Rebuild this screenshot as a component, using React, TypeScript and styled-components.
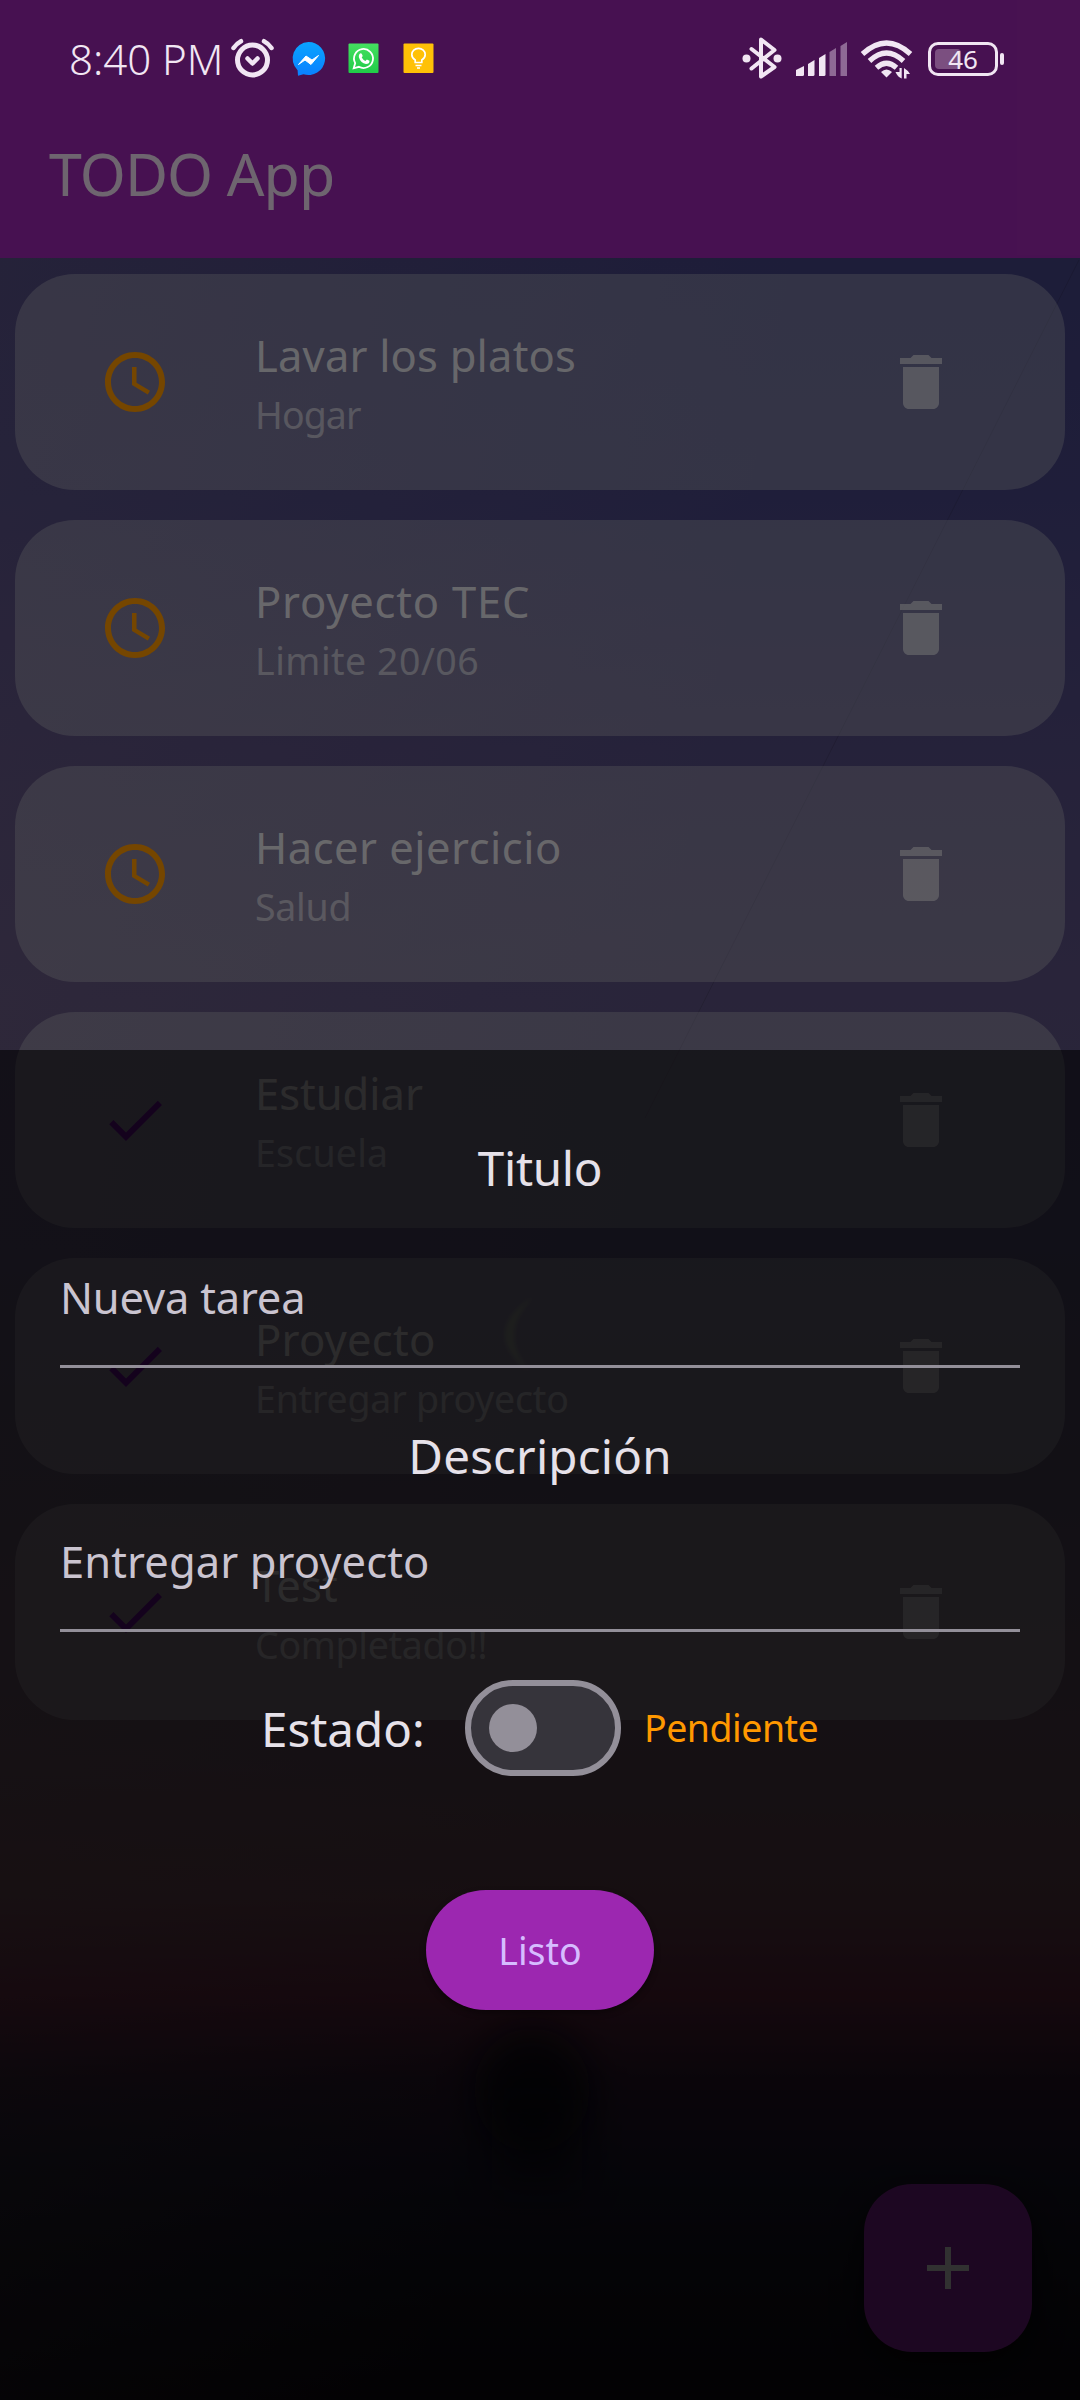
import React from "react";
import styled, { createGlobalStyle } from "styled-components";
import { MdAccessTime, MdAdd, MdCheck, MdDelete } from "react-icons/md";

const Global = createGlobalStyle`
  body { margin: 0; background: #000; }
  * { box-sizing: border-box; }
`;

const Screen = styled.div`
  position: relative;
  width: 1080px;
  height: 2400px;
  overflow: hidden;
  font-family: "Noto Sans", "Open Sans", sans-serif;
  font-weight: 400;
`;

const Page = styled.div`
  display: flex;
  flex-direction: column;
  height: 2400px;
`;

const AppBar = styled.header`
  flex: none;
  height: 258px;
  padding: 116px 0 0 49px;
  background: #9c27b0;
`;

const AppTitle = styled.h1`
  margin: 0;
  font-size: 59px;
  line-height: 114px;
  font-weight: 400;
  letter-spacing: -0.9px;
  color: rgba(255, 255, 255, 0.84);
`;

const Body = styled.main`
  position: relative;
  flex: 1;
  background:
    linear-gradient(100deg, rgba(150, 120, 130, 0.2), rgba(60, 50, 110, 0) 55%),
    linear-gradient(
      180deg,
      #403f7c 0, #45437e 240px, #524a7e 490px, #5a507e 742px, #5c547c 992px,
      #625670 1232px, #6f5668 1500px, #774e5c 1640px, #6f2c48 1740px,
      #38203a 1820px, #221d34 1900px, #181824 2000px, #120d16 2142px
    );
`;

const Scenery = styled.svg`
  position: absolute;
  inset: 0;
`;

const TaskList = styled.ul`
  position: relative;
  display: flex;
  flex-direction: column;
  gap: 30px;
  margin: 0;
  padding: 16px 15px;
  list-style: none;
`;

const TaskCard = styled.li`
  display: flex;
  align-items: center;
  height: 216px;
  padding: 0 108px 0 84px;
  border-radius: 60px;
  background: rgba(212, 214, 214, 0.32);
`;

const StateIcon = styled.span<{ $done: boolean }>`
  display: flex;
  width: 72px;
  margin-right: 84px;
  font-size: 72px;
  color: ${(p) => (p.$done ? "#6a0f96" : "#ff9800")};
`;

const TaskText = styled.div`
  flex: 1;
  display: flex;
  flex-direction: column;
  padding-top: 6px;
`;

const TaskTitle = styled.span<{ $ls: number }>`
  font-size: 43.5px;
  line-height: 60px;
  letter-spacing: ${(p) => p.$ls}px;
  color: rgba(255, 255, 255, 0.8);
`;

const TaskNote = styled.span<{ $ls: number }>`
  font-size: 37.5px;
  line-height: 60px;
  letter-spacing: ${(p) => p.$ls}px;
  color: rgba(255, 255, 255, 0.54);
`;

const TrashIcon = styled.span`
  display: flex;
  font-size: 72px;
  color: rgba(255, 255, 255, 0.54);
`;

const AddButton = styled.button`
  position: absolute;
  right: 48px;
  bottom: 48px;
  display: flex;
  align-items: center;
  justify-content: center;
  width: 168px;
  height: 168px;
  padding: 0;
  border: 0;
  border-radius: 48px;
  background: #9c27b0;
  box-shadow: 0 12px 30px rgba(0, 0, 0, 0.6);
  color: #fff;
  font-size: 72px;
`;

const Scrim = styled.div`
  position: absolute;
  inset: 0;
  display: flex;
  flex-direction: column;
  justify-content: flex-end;
  background: rgba(0, 0, 0, 0.54);
`;

const Sheet = styled.section`
  display: flex;
  flex-direction: column;
  align-items: center;
  height: 1350px;
  padding: 86px 60px 0;
  background: rgba(0, 0, 0, 0.58);
`;

const Label = styled.span<{ $ls?: number }>`
  font-size: 47.5px;
  line-height: 64px;
  letter-spacing: ${(p) => p.$ls ?? 0}px;
  color: #e6e1e9;
  white-space: nowrap;
`;

const Field = styled.div<{ $ls: number; $top: number; $bottom: number }>`
  align-self: stretch;
  margin: ${(p) => p.$top}px 0 ${(p) => p.$bottom}px;
  padding: 0 0 38px 0;
  border-bottom: 3px solid #938f99;
  font-size: 43.5px;
  line-height: 60px;
  letter-spacing: ${(p) => p.$ls}px;
  color: #cac4d0;
`;

const StateRow = styled.div`
  display: flex;
  align-items: center;
  align-self: stretch;
  height: 96px;
  padding-left: 201px;
`;

const LabelSlot = styled.div`
  width: 204px;
  display: flex;
  padding-top: 1px;
`;

const Switch = styled.div`
  display: flex;
  align-items: center;
  width: 156px;
  height: 96px;
  padding-left: 18px;
  border: 6px solid #938f99;
  border-radius: 48px;
  background: #36343b;
`;

const Thumb = styled.span`
  width: 48px;
  height: 48px;
  border-radius: 50%;
  background: #938f99;
`;

const StateName = styled.span`
  margin: 0 0 0 23px;
  font-size: 37.5px;
  line-height: 60px;
  letter-spacing: -0.5px;
  color: #ff9800;
`;

const DoneButton = styled.button`
  width: 228px;
  height: 120px;
  margin-top: 114px;
  padding: 0;
  border: 0;
  border-radius: 60px;
  background: #9c27b0;
  box-shadow: 0 3px 6px rgba(0, 0, 0, 0.4);
  font: 400 37.5px "Noto Sans", "Open Sans", sans-serif;
  color: #d6bcff;
`;

const StatusBar = styled.div`
  position: absolute;
  top: 0;
  left: 0;
  right: 0;
  display: flex;
  align-items: center;
  height: 118px;
  padding: 0 82px 0 69px;
`;

const Clock = styled.span`
  width: 161px;
  font-size: 42px;
  font-weight: 300;
  line-height: 60px;
  white-space: nowrap;
  color: #f1e6f3;
`;

const Spacer = styled.span`
  flex: 1;
`;

const StatusGlyphs = styled.svg`
  flex: none;
  display: block;
`;

const BatteryBox = styled.div`
  position: relative;
  display: flex;
  align-items: center;
  justify-content: center;
  width: 70px;
  height: 34px;
  margin-left: 15px;
  border: 3.5px solid #f1e6f3;
  border-radius: 10px;
  font-size: 26px;
  line-height: 34px;
  color: #f1e6f3;
  &::before {
    content: "";
    position: absolute;
    left: 4px;
    top: 4px;
    width: 26px;
    height: 20px;
    border-radius: 4px;
    background: #7b4f80;
  }
  &::after {
    content: "";
    position: absolute;
    right: -9px;
    top: 8px;
    width: 4px;
    height: 12px;
    border-radius: 2px;
    background: #f1e6f3;
  }
`;

const BatteryLevel = styled.span`
  position: relative;
`;

interface Task {
  title: string;
  note: string;
  done: boolean;
  tls: number;
  nls: number;
}

const tasks: Task[] = [
  { title: "Lavar los platos", note: "Hogar", done: false, tls: 0.2, nls: -0.9 },
  { title: "Proyecto TEC", note: "Limite 20/06", done: false, tls: 0.8, nls: 0.5 },
  { title: "Hacer ejercicio", note: "Salud", done: false, tls: 0.5, nls: -0.25 },
  { title: "Estudiar", note: "Escuela", done: true, tls: 0, nls: 0.2 },
  { title: "Proyecto", note: "Entregar proyecto", done: true, tls: 0.25, nls: -0.2 },
  { title: "Test", note: "Completado!!", done: true, tls: 0.2, nls: -0.3 },
];

function LeftGlyphs() {
  return (
    <StatusGlyphs width="206" height="48" viewBox="230 35 206 48">
      <defs>
        <linearGradient id="msg" x1="0" y1="0" x2="0" y2="1">
          <stop offset="0" stopColor="#0aa4ff" />
          <stop offset="1" stopColor="#0a80ff" />
        </linearGradient>
        <linearGradient id="wa" x1="0" y1="0" x2="0" y2="1">
          <stop offset="0" stopColor="#45e060" />
          <stop offset="1" stopColor="#20cc48" />
        </linearGradient>
      </defs>
      <g fill="none" stroke="#f1e6f3" strokeLinecap="round" strokeLinejoin="round">
        <circle cx="252.500" cy="60" r="15" strokeWidth="5" />
        <path d="M247.500 58.500l5 5 5-5" strokeWidth="4.500" />
        <path d="M233.500 48q3-4.500 7.500-6.800M271.500 48q-3-4.500-7.500-6.800" strokeWidth="4.500" />
      </g>
      <path d="M308.500 42a16.500 16.500 0 1 1-5 32.200l-5.500 1.600-.4-5.500A16.500 16.500 0 0 1 308.500 42z" fill="url(#msg)" />
      <path d="M298.500 64.500l7.500-8.500 6 4 6.500-4.500-7.500 9-6-4.500z" fill="#fff" stroke="#fff" strokeLinejoin="round" />
      <rect x="348.500" y="43.500" width="30" height="29.500" rx="1" fill="url(#wa)" />
      <path d="M353.700 68.300l1.500-5.200a9.500 9.500 0 1 1 3.700 3.700z" fill="none" stroke="#fff" strokeWidth="1.800" />
      <path d="M359.500 54q1.500-1.500 2.500.2l.7 1.800-1 1.600q1.300 2.300 3.700 3.400l1.500-1.500 2.600 1.300q.2 3.200-3.500 3.200-5.500-1-7.200-7-.1-2 .7-3z" fill="#fff" />
      <rect x="403.500" y="43.500" width="30" height="29.500" rx="1" fill="#ffc107" />
      <path d="M415.200 62.500v-2.500q-3.400-2-3.400-5.500a6.700 6.200 0 0 1 13.400 0q0 3.500-3.400 5.500v2.500zM415.500 65.500h6M417 68h3" fill="none" stroke="#fff" strokeWidth="1.700" />
    </StatusGlyphs>
  );
}

function RightGlyphs() {
  return (
    <StatusGlyphs width="172" height="48" viewBox="741 35 172 48">
      <path d="M751.500 49l23 18L761 76.500V39.500L774.500 50l-23 18.500" fill="none" stroke="#f1e6f3" strokeWidth="4" strokeLinecap="round" strokeLinejoin="round" />
      <circle cx="746.500" cy="58.500" r="4" fill="#f1e6f3" />
      <circle cx="777.500" cy="58.500" r="4" fill="#f1e6f3" />
      <g fill="#f1e6f3">
        <path d="M796 70l8-4v8.500q0 1.500-1.500 1.500H796z" />
        <path d="M808 64l6.500-4v14.500q0 1.500-1.500 1.500h-5z" />
        <path d="M819 58l6.500-4v20.500q0 1.500-1.500 1.500h-5z" />
        <path d="M829.500 52l6.500-4v28h-6.500zM840.500 46l6.500-4v34h-6.500z" opacity=".42" />
        <path d="M886.500 77.500l-5.500-5.500q5.500-5 11 0z" />
        <path d="M895.500 72h4v-4h2.200v10.500q-4-1.500-6.200-6.500zM904 68q3.500 2 6 6h-3.500v4.500H904z" />
      </g>
      <g fill="none" stroke="#f1e6f3" strokeWidth="5.200">
        <path d="M862.500 54q24-22 48 0M869.500 61q17-16 34 0M876.500 67.800q10-9 20 0" />
      </g>
    </StatusGlyphs>
  );
}

export default function App() {
  return (
    <Screen>
      <Global />
      <Page>
        <AppBar>
          <AppTitle>TODO App</AppTitle>
        </AppBar>
        <Body>
          <Scenery width="1080" height="2142" viewBox="0 258 1080 2142">
            <defs>
              <filter id="soft" x="-50%" y="-50%" width="200%" height="200%">
                <feGaussianBlur stdDeviation="18" />
              </filter>
              <filter id="glow" x="-50%" y="-50%" width="200%" height="200%">
                <feGaussianBlur stdDeviation="2" />
              </filter>
            </defs>
            <path d="M1079 260L645 1118" stroke="#000" strokeOpacity=".12" strokeWidth="1" />
            <path d="M534 1296q-56 36-4 76q-34-38 4-76z" fill="#8d9a80" opacity=".75" filter="url(#glow)" />
            <ellipse cx="532" cy="2090" rx="58" ry="62" fill="#0a0c12" opacity=".85" filter="url(#soft)" />
            <rect x="492" y="2100" width="90" height="90" fill="#0a0c12" opacity=".5" filter="url(#soft)" />
          </Scenery>
          <TaskList>
            {tasks.map((t) => (
              <TaskCard key={t.title}>
                <StateIcon $done={t.done}>{t.done ? <MdCheck /> : <MdAccessTime />}</StateIcon>
                <TaskText>
                  <TaskTitle $ls={t.tls}>{t.title}</TaskTitle>
                  <TaskNote $ls={t.nls}>{t.note}</TaskNote>
                </TaskText>
                <TrashIcon>
                  <MdDelete />
                </TrashIcon>
              </TaskCard>
            ))}
          </TaskList>
          <AddButton>
            <MdAdd />
          </AddButton>
        </Body>
      </Page>
      <Scrim>
        <Sheet>
          <Label $ls={-0.3}>Titulo</Label>
          <Field $ls={-0.2} $top={67} $bottom={56}>Nueva tarea</Field>
          <Label $ls={0.2}>Descripción</Label>
          <Field $ls={0.1} $top={43} $bottom={48}>Entregar proyecto</Field>
          <StateRow>
            <LabelSlot>
              <Label>Estado:</Label>
            </LabelSlot>
            <Switch>
              <Thumb />
            </Switch>
            <StateName>Pendiente</StateName>
          </StateRow>
          <DoneButton>Listo</DoneButton>
        </Sheet>
      </Scrim>
      <StatusBar>
        <Clock>8:40 PM</Clock>
        <LeftGlyphs />
        <Spacer />
        <RightGlyphs />
        <BatteryBox>
          <BatteryLevel>46</BatteryLevel>
        </BatteryBox>
      </StatusBar>
    </Screen>
  );
}
